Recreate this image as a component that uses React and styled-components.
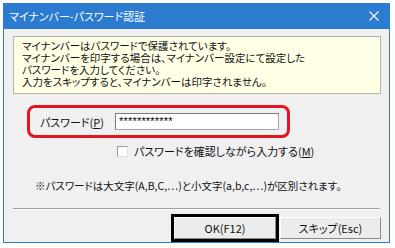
import React from "react";
import styled, { createGlobalStyle } from "styled-components";

const GlobalStyle = createGlobalStyle`
  body {
    margin: 0;
    background: #ffffff;
    font-family: "Noto Sans CJK JP", "Noto Sans", sans-serif;
    font-feature-settings: "palt";
  }
`;

const App = () => {
  // Lines shown in the yellow information box
  const infoLines = [
    "マイナンバーはパスワードで保護されています。",
    "マイナンバーを印字する場合は、マイナンバー設定にて設定した",
    "パスワードを入力してください。",
    "入力をスキップすると、マイナンバーは印字されません。",
  ];
  return (
    <>
      <GlobalStyle />
      <Window>
        <TitleBar>
          <span>マイナンバー-パスワード認証</span>
          <CloseIcon viewBox="0 0 10 10">
            <path d="M0.5 0.5 L9.5 9.5 M9.5 0.5 L0.5 9.5" />
          </CloseIcon>
        </TitleBar>
        <Body>
          <InfoBox>
            {infoLines.map((line) => (
              <p key={line}>{line}</p>
            ))}
          </InfoBox>
          <PasswordGroup>
            <Label>
              パスワード(<u>P</u>)
            </Label>
            <Input>************</Input>
          </PasswordGroup>
          <CheckRow>
            <Check />
            <span>
              パスワードを確認しながら入力する(<u>M</u>)
            </span>
          </CheckRow>
          <Note>
            ※パスワードは大文字(A,B,C,…)と小文字(a,b,c,…)が区別されます。
          </Note>
          <Separator />
          <ButtonRow>
            <Focus>
              <Button>OK(F12)</Button>
            </Focus>
            <Button>スキップ(Esc)</Button>
          </ButtonRow>
        </Body>
      </Window>
    </>
  );
};

const Window = styled.div`
  margin: 3px 0 0 3px;
  width: 387px;
  height: 240px;
  box-sizing: border-box;
  border: 1px solid #2b7bd1;
  border-top: none;
  background: #f0f0f0;
  display: flex;
  flex-direction: column;
`;

const TitleBar = styled.div`
  height: 27px;
  margin: 0 -1px;
  background: #2b7bd1;
  color: #ffffff;
  display: flex;
  align-items: center;
  justify-content: space-between;
  padding: 0 11px 0 6px;
  font-size: 11px;
  span {
    margin-top: -1px;
  }
`;

const CloseIcon = styled.svg`
  width: 10px;
  height: 10px;
  stroke: #ffffff;
  stroke-width: 1.1;
  fill: none;
`;

const Body = styled.div`
  flex: 1;
  display: flex;
  flex-direction: column;
  padding: 7px 8px 0 9px;
`;

const InfoBox = styled.div`
  width: 368px;
  height: 58px;
  box-sizing: border-box;
  background: #ffffe6;
  border: 1px solid #b4b4a8;
  padding: 3px 0 0 8px;
  font-size: 10.5px;
  line-height: 12px;
  color: #111111;
  p {
    margin: 0;
    white-space: nowrap;
  }
`;

const PasswordGroup = styled.div`
  margin: 11px 0 0 14px;
  width: 263px;
  height: 33px;
  box-sizing: border-box;
  border: 3px solid #e3161f;
  border-radius: 8px;
  display: flex;
  align-items: center;
  padding-left: 10px;
  gap: 11px;
`;

const Label = styled.span`
  font-size: 11px;
  color: #111111;
  white-space: nowrap;
`;

const Input = styled.div`
  width: 164px;
  height: 17px;
  box-sizing: border-box;
  background: #ffffff;
  border: 1px solid #a6a6a6;
  border-top-color: #7a7a7a;
  border-left-color: #7a7a7a;
  font-family: "Liberation Sans", sans-serif;
  font-size: 11px;
  line-height: 15px;
  padding-left: 3px;
  letter-spacing: 0.2px;
`;

const CheckRow = styled.label`
  margin: 5px 0 0 104px;
  display: flex;
  align-items: center;
  gap: 6px;
  font-size: 11px;
  color: #111111;
`;

const Check = styled.span`
  width: 11px;
  height: 11px;
  box-sizing: border-box;
  background: #ffffff;
  border: 1px solid #e2e2e2;
  border-top-color: #9a9a9a;
  border-left-color: #9a9a9a;
`;

const Note = styled.div`
  margin: 19px 0 0 22px;
  font-size: 10.5px;
  color: #111111;
  white-space: nowrap;
`;

const Separator = styled.div`
  margin: 15px 0 0 0;
  width: 367px;
  height: 1px;
  background: #a0a0a0;
  border-bottom: 1px solid #ffffff;
`;

const ButtonRow = styled.div`
  margin-top: 4px;
  display: flex;
  align-items: center;
  padding-left: 158px;
  gap: 1px;
`;

const Focus = styled.div`
  border: 3px solid #000000;
  display: flex;
`;

const Button = styled.div`
  width: 102px;
  height: 22px;
  box-sizing: border-box;
  background: #ececec;
  border: 1px solid #ffffff;
  border-right-color: #8a8a8a;
  border-bottom-color: #8a8a8a;
  display: flex;
  align-items: center;
  justify-content: center;
  font-size: 11px;
  color: #111111;
`;

export default App;
